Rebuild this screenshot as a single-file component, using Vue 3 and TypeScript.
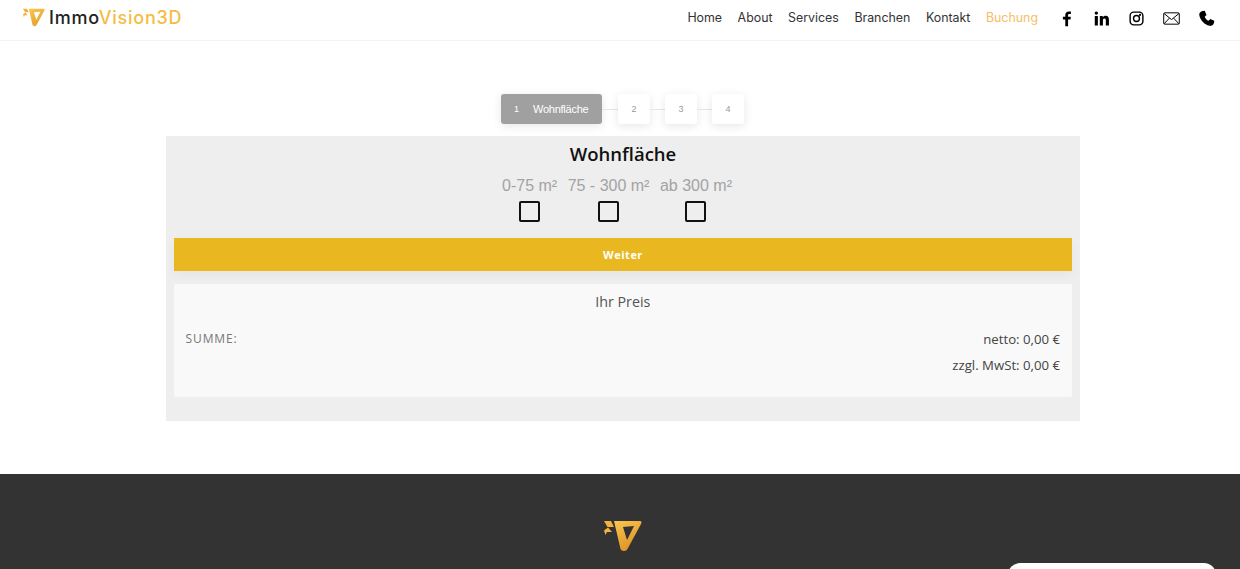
<script setup lang="ts">
const links = ['Home', 'About', 'Services', 'Branchen', 'Kontakt', 'Buchung']
const steps = [2, 3, 4]
const areas = ['0-75 m²', '75 - 300 m²', 'ab 300 m²']
</script>

<template>
  <div class="page">
    <header class="top">
      <div class="brand">
        <svg class="mark" viewBox="0 0 38 32">
          <defs>
            <linearGradient id="gold" x1="0.2" y1="0" x2="0.7" y2="1">
              <stop offset="0" stop-color="#f8c34e" />
              <stop offset="1" stop-color="#e3a02a" />
            </linearGradient>
          </defs>
          <path fill="url(#gold)" fill-rule="evenodd" d="M10 1H35.500Q38.500 1 37 4L23.500 29Q22.500 31 20.500 31H19.500Q17.500 31 16.500 29ZM19 7L23 20L30 6Z" />
          <path fill="#f2b23c" d="M0 1H7L10 7H3.500ZM0 10.500L4 7.500L8 12H3L1.500 15Z" />
        </svg>
        <span class="brand-text">Immo<span class="brand-gold">Vision3D</span></span>
      </div>
      <nav class="nav">
        <a v-for="l in links" :key="l" :class="{ on: l === 'Buchung' }">{{ l }}</a>
      </nav>
      <div class="socials">
        <svg viewBox="0 0 24 24"><path d="M14.2 23V13.4H17.6L18.1 9.6H14.2V7.3C14.2 6.2 14.6 5.5 16.1 5.5H18.2V2.2C17.8 2.1 16.6 2 15.3 2 12.3 2 10.3 3.8 10.3 7V9.6H6.9V13.4H10.3V23Z" /></svg>
        <svg viewBox="0 0 24 24"><path d="M2.5 8.500H6.900V22H2.500ZM4.700 2A2.400 2.400 0 1 1 4.700 6.800 2.400 2.400 0 0 1 4.700 2ZM9.600 8.500H13.800V10.400C14.500 9.200 15.900 8.200 18 8.200 21.600 8.200 22.500 10.600 22.500 14V22H18.100V14.900C18.100 13.200 17.700 12 16.100 12 14.600 12 14 13.200 14 14.900V22H9.600Z" /></svg>
        <svg viewBox="0 0 24 24" class="line"><rect x="3" y="3" width="18" height="18" rx="5" /><circle cx="12" cy="12" r="4.200" /><circle cx="17" cy="7" r="0.600" /></svg>
        <svg viewBox="0 0 24 24" class="line thin"><rect x="1" y="4" width="22" height="16" rx="1.500" /><path d="M1.500 5L12 13.500 22.500 5M1.500 19.500L9 11.500M22.500 19.500L15 11.500" /></svg>
        <svg viewBox="0 0 24 24"><path d="M6.500 1.500L9.500 1 12 7 9.400 9.400C10.400 12 12.400 14.200 15 15.300L17.300 12.600 23 15.200 22.500 18.500C22 21 19.500 22.800 17 22.400 9.400 21.100 3 14.500 1.800 7 1.400 4.400 3.600 2 6.500 1.500Z" /></svg>
      </div>
    </header>

    <main class="main">
      <div class="stepper">
        <div class="step active"><span>1</span><span class="step-name">Wohnfläche</span></div>
        <template v-for="n in steps" :key="n">
          <i class="join"></i>
          <div class="step">{{ n }}</div>
        </template>
      </div>

      <section class="panel">
        <h2>Wohnfläche</h2>
        <div class="areas">
          <label v-for="a in areas" :key="a" class="area">
            <span>{{ a }}</span>
            <i class="box"></i>
          </label>
        </div>
        <button class="next">Weiter</button>
        <div class="price">
          <h3>Ihr Preis</h3>
          <div class="sum">
            <span class="sum-label">SUMME:</span>
            <div class="sum-values">
              <p>netto: 0,00 €</p>
              <p>zzgl. MwSt: 0,00 €</p>
            </div>
          </div>
        </div>
      </section>
    </main>

    <footer class="foot">
      <svg class="foot-mark" viewBox="0 0 38 32">
        <defs>
          <linearGradient id="gold2" x1="0.2" y1="0" x2="0.7" y2="1">
            <stop offset="0" stop-color="#f8c34e" />
            <stop offset="1" stop-color="#d98f22" />
          </linearGradient>
        </defs>
        <path fill="url(#gold2)" fill-rule="evenodd" d="M10 1H35.500Q38.500 1 37 4L23.500 29Q22.500 31 20.500 31H19.500Q17.500 31 16.500 29ZM19 7L23 20L30 6Z" />
        <path fill="#f2b23c" d="M0 1H7L10 7H3.500ZM0 10.500L4 7.500L8 12H3L1.500 15Z" />
      </svg>
    </footer>
    <div class="chat"></div>
  </div>
</template>

<style>
html, body {
  margin: 0;
  height: 569px;
  overflow: hidden;
  background: #fff;
}
</style>

<style scoped>
.page {
  height: 569px;
  display: flex;
  flex-direction: column;
  position: relative;
  overflow: hidden;
  font-family: "Open Sans", sans-serif;
}
.top {
  height: 41px;
  box-sizing: border-box;
  border-bottom: 1px solid #f3f3f3;
  display: flex;
  align-items: center;
  padding: 0 25px 6px 23px;
}
.brand {
  display: flex;
  align-items: center;
  gap: 4px;
  flex: 1;
}
.mark {
  width: 22px;
  height: 19px;
}
.brand-text {
  font-family: Inter, sans-serif;
  font-size: 18px;
  letter-spacing: 0.75px;
  color: #222;
  font-weight: 500;
}
.brand-gold {
  color: #f5bc45;
}
.nav {
  display: flex;
  gap: 15.5px;
  font-family: "Inter", sans-serif;
  font-size: 12.4px;
  color: #333;
  margin-right: 20px;
}
.nav .on {
  color: #f6bd67;
}
.socials {
  display: flex;
  gap: 18px;
  margin-top: 2px;
}
.socials svg {
  width: 17px;
  height: 17px;
  fill: #000;
}
.socials .line {
  fill: none;
  stroke: #000;
  stroke-width: 2;
}
.socials .line circle:last-child {
  fill: #000;
}
.socials .thin {
  stroke-width: 1.4;
}
.main {
  height: 433px;
  display: flex;
  flex-direction: column;
  align-items: center;
  padding: 53px 0 0 6px;
  box-sizing: border-box;
}
.stepper {
  display: flex;
  align-items: center;
  height: 30px;
  margin: 0 0 12px -1px;
  font-family: "Liberation Sans", sans-serif;
  font-size: 9px;
  color: #999;
}
.step {
  width: 32px;
  height: 30px;
  border-radius: 3px;
  background: #fff;
  box-shadow: 0 2px 10px rgba(0, 0, 0, 0.1);
  display: flex;
  align-items: center;
  justify-content: center;
}
.step.active {
  width: 101px;
  background: #a0a0a0;
  color: #fff;
  justify-content: flex-start;
  gap: 14px;
  padding-left: 13px;
  box-sizing: border-box;
}
.step-name {
  font-size: 11px;
  letter-spacing: -0.25px;
}
.join {
  width: 15px;
  height: 1px;
  background: #e6e6e6;
}
.step.active + .join {
  width: 16px;
}
.panel {
  width: 914px;
  height: 285px;
  box-sizing: border-box;
  background: #eee;
  padding: 6px 8px 0;
  display: flex;
  flex-direction: column;
}
h2 {
  margin: 0;
  text-align: center;
  font-size: 18.5px;
  line-height: 23px;
  font-weight: 600;
  color: #111;
}
.areas {
  display: flex;
  gap: 10.5px;
  margin: 12px 0 0 328px;
  font-family: "Liberation Sans", sans-serif;
  font-size: 16px;
  line-height: 18px;
  color: #a3a3a3;
}
.area {
  display: flex;
  flex-direction: column;
  align-items: center;
  gap: 6px;
}
.box {
  width: 17px;
  height: 17px;
  border: 2px solid #111;
  border-radius: 2px;
}
.next {
  margin-top: 16px;
  height: 33px;
  border: 0;
  background: #e9b720;
  color: #fff;
  font-family: "Open Sans", sans-serif;
  font-size: 11px;
  font-weight: 700;
  letter-spacing: 0.5px;
  box-shadow: 0 4px 10px rgba(0, 0, 0, 0.04);
}
.price {
  margin-top: 13px;
  height: 113px;
  background: #f9f9f9;
  border-radius: 2px;
  padding: 8px 12px 0 11.5px;
  box-sizing: border-box;
}
h3 {
  margin: 0 0 17px;
  text-align: center;
  font-weight: 400;
  font-size: 14.3px;
  line-height: 20px;
  color: #555;
}
.sum {
  display: flex;
  justify-content: space-between;
  align-items: flex-start;
}
.sum-label {
  font-size: 12px;
  line-height: 20px;
  letter-spacing: 0.9px;
  color: #777;
}
.sum-values {
  text-align: right;
  font-size: 13.2px;
  line-height: 26px;
  color: #444;
  margin-top: -3px;
}
.sum-values p {
  margin: 0;
}
.foot {
  flex: 1;
  background: #333;
  display: flex;
  justify-content: center;
  align-items: flex-start;
  padding: 46px 0 0 6px;
}
.foot-mark {
  width: 38px;
  height: 32px;
}
.chat {
  position: absolute;
  left: 1008px;
  top: 563px;
  width: 208px;
  height: 30px;
  border-radius: 12px;
  background: #fff;
}
</style>
